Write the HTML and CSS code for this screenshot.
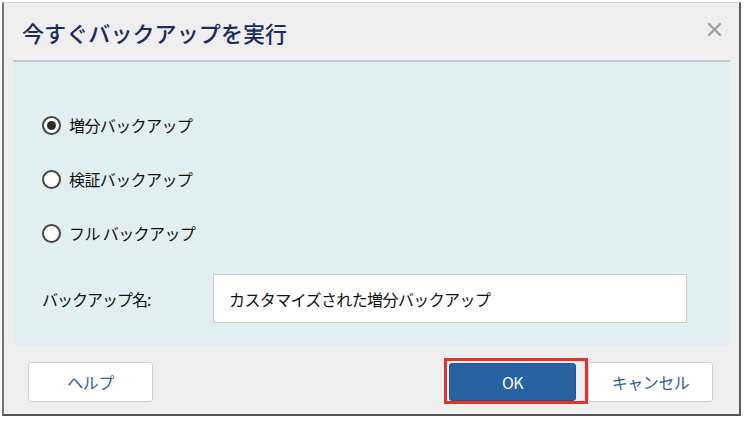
FILE: index.html
```
<!DOCTYPE html>
<html lang="ja">
<head>
  <meta charset="UTF-8" />
  <meta name="viewport" content="width=device-width, initial-scale=1" />
  <title>今すぐバックアップを実行</title>
  <link rel="stylesheet" href="styles.css">
</head>
<body>

  <div class="dialog">
    <div class="dialog-head">
      <h1 class="dialog-title">今すぐバックアップを実行</h1>
      <button class="close" aria-label="閉じる">
        <svg width="15" height="15" viewBox="0 0 15 15">
          <path d="M2 2 L13 13 M13 2 L2 13" stroke="#9c9c9c" stroke-width="2.2" stroke-linecap="round" fill="none"/>
        </svg>
      </button>
    </div>

    <div class="dialog-body">
      <label class="option">
        <input type="radio" name="kind" checked>
        <span>増分バックアップ</span>
      </label>
      <label class="option">
        <input type="radio" name="kind">
        <span>検証バックアップ</span>
      </label>
      <label class="option">
        <input type="radio" name="kind">
        <span>フル バックアップ</span>
      </label>

      <div class="name-row">
        <label class="name-label" for="backup-name">バックアップ名:</label>
        <input id="backup-name" class="name-input" type="text" value="カスタマイズされた増分バックアップ">
      </div>
    </div>

    <div class="dialog-foot">
      <button class="btn">ヘルプ</button>
      <span class="spacer"></span>
      <span class="marked">
        <button class="btn btn-primary">OK</button>
        <span class="mark"></span>
      </span>
      <button class="btn">キャンセル</button>
    </div>
  </div>

</body>
</html>
```

FILE: styles.css
```
body {
  margin: 0;
  background: #fff;
  font-family: "Noto Sans CJK JP", "Noto Sans", sans-serif;
  color: #1a1a1a;
}

.dialog {
  box-sizing: border-box;
  width: 739px;
  height: 414px;
  margin: 2px 3px 0 2px;
  padding: 0 9px;
  display: flex;
  flex-direction: column;
  background: #efefef;
  border-top: 1px solid #d3d3d3;
  border-left: 2px solid #767676;
  border-right: 2px solid #5c5c5c;
  border-bottom: 2px solid #555;
}

/* header */
.dialog-head {
  height: 57px;
  display: flex;
  align-items: center;
  justify-content: space-between;
  padding: 0 8px 0 9px;
}

.dialog-title {
  margin: 0;
  font-size: 22px;
  font-weight: 500;
  letter-spacing: 0.1px;
  color: #1a2b60;
  padding-top: 1px;
}

.close {
  border: none;
  background: none;
  padding: 0;
  width: 15px;
  height: 15px;
  margin-bottom: 5px;
  cursor: pointer;
}

.close svg {
  display: block;
}

/* body panel */
.dialog-body {
  box-sizing: border-box;
  height: 286px;
  padding: 50px 0 0 29px;
  background: #e2eff2;
  border-top: 2px solid #c6ccce;
  display: flex;
  flex-direction: column;
  gap: 28px;
}

.option {
  height: 26px;
  display: flex;
  align-items: center;
  gap: 8px;
  font-size: 16px;
  letter-spacing: -0.6px;
  color: #111;
}

.option input {
  appearance: none;
  box-sizing: border-box;
  width: 19px;
  height: 19px;
  margin: 0;
  border: 2px solid #454545;
  border-radius: 50%;
  background: #fff;
  display: grid;
  place-content: center;
}

.option input:checked::before {
  content: "";
  width: 9px;
  height: 9px;
  border-radius: 50%;
  background: #2d2d2d;
}

.name-row {
  display: flex;
  align-items: center;
}

.name-label {
  width: 171px;
  font-size: 16px;
  letter-spacing: -1px;
  color: #111;
}

.name-input {
  box-sizing: border-box;
  width: 474px;
  height: 49px;
  padding: 0 15px;
  border: 1px solid #c9cccd;
  background: #fff;
  font-family: inherit;
  font-size: 16px;
  letter-spacing: -0.6px;
  color: #111;
}

/* footer */
.dialog-foot {
  flex: 1;
  display: flex;
  align-items: flex-start;
  padding: 16px 17px 0 15px;
}

.spacer {
  flex: 1;
}

.btn {
  box-sizing: border-box;
  width: 125px;
  height: 40px;
  border: 1px solid #d0d0d0;
  border-radius: 3px;
  background: #fff;
  font-family: inherit;
  font-size: 16px;
  letter-spacing: -0.5px;
  color: #2c5d9c;
  cursor: pointer;
}

.btn-primary {
  width: 127px;
  height: 38px;
  margin-top: 1px;
  background: #2962a3;
  border-color: #24558d;
  color: #fff;
}

.marked {
  position: relative;
  margin-right: 12px;
}

.mark {
  position: absolute;
  left: -5px;
  top: -4px;
  width: 144px;
  height: 46px;
  box-sizing: border-box;
  border: 3px solid #e5332a;
  pointer-events: none;
}
```
